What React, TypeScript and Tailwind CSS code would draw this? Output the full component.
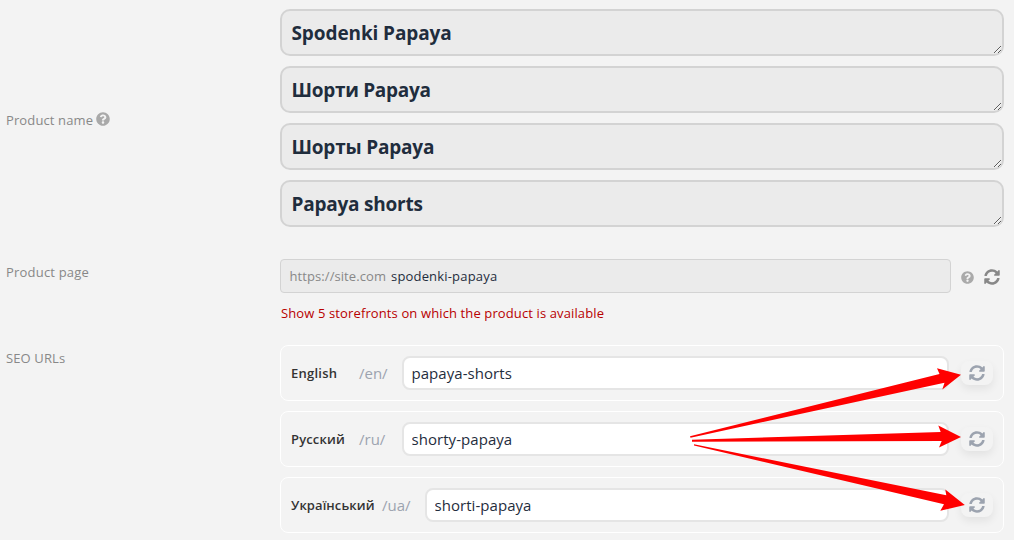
import { FaQuestionCircle, FaSyncAlt } from 'react-icons/fa';

const names = [
  { text: 'Spodenki Papaya', style: 'tracking-[-0.1px]' },
  { text: 'Шорти Papaya', style: 'tracking-[-0.28px]' },
  { text: 'Шорты Papaya', style: 'tracking-[-0.2px]' },
  { text: 'Papaya shorts', style: 'tracking-[-0.22px]' },
];

const urls = [
  { lang: 'English', code: '/en/', slug: 'papaya-shorts', langStyle: 'w-[68px] tracking-[0.25px]' },
  { lang: 'Русский', code: '/ru/', slug: 'shorty-papaya', langStyle: 'w-[68px] tracking-[0.15px]' },
  { lang: 'Український', code: '/ua/', slug: 'shorti-papaya', langStyle: 'w-[91px] tracking-[0.08px]' },
];

function Arrows() {
  return (
    <svg className="absolute left-0 top-0 pointer-events-none" width="1014" height="540" fill="#ff0000">
      <polygon points="690,436.3 939.5,374 937,368.3 961,374.8 942.3,389.5 944.5,382.7 690.5,437.7" />
      <polygon points="692,439.7 940.7,432 938.3,425.5 961,437 939,447.5 941.7,441 692,441.8" />
      <polygon points="694,444.3 946.3,495.3 945.3,489.5 964.8,505 940.3,510.8 944,504.3 694,445.6" />
    </svg>
  );
}

export default function App() {
  return (
    <div className="relative w-[1014px] h-[540px] overflow-hidden bg-[#f3f3f3] font-['Open_Sans','Noto_Sans',sans-serif] text-[13px] text-[#888888]">
      <div className="flex flex-col pt-[9px] pl-[6px] pr-[10px]">
        {/* Product name */}
        <div className="flex items-center h-[218px]">
          <div className="flex items-center w-[274px] pt-[4px] leading-5">
            <span className="w-[90px] tracking-[0.12px]">Product name</span>
            <FaQuestionCircle className="size-[14px] text-[#a9a9a9] -mt-[2px]" />
          </div>
          <div className="flex flex-col gap-[10px] flex-1">
            {names.map((name) => (
              <textarea
                key={name.text}
                rows={1}
                defaultValue={name.text}
                className={`block w-full h-[47px] px-[9.5px] pt-[9px] pb-[7px] rounded-[10px] border-2 border-[#d3d3d3] bg-[#ebebeb] text-[19px] leading-[27px] font-bold text-[#1f2d3d] overflow-hidden ${name.style}`}
              />
            ))}
          </div>
        </div>

        {/* Product page */}
        <div className="flex mt-[32px] h-[86px]">
          <div className="w-[274px] pt-[3px] leading-5 tracking-[0.2px]">Product page</div>
          <div className="flex-1">
            <div className="flex items-center">
              <div className="flex items-center w-[671px] h-[34px] pt-[2px] pl-[8.5px] rounded-[4px] border border-[#d3d3d3] bg-[#ebebeb]">
                <span className="w-[101.5px] tracking-[0.08px]">https://site.com</span>
                <span className="text-[#1f2d3d] tracking-[0.18px]">spodenki-papaya</span>
              </div>
              <FaQuestionCircle className="size-[13px] ml-[10px] mt-[3px] text-[#aaaaaa]" />
              <FaSyncAlt className="size-[16px] ml-[10px] mt-[2px] text-[#888888]" />
            </div>
            <div className="pl-[1px] mt-[10px] leading-5 tracking-[0.12px] text-[#b80000]">
              Show 5 storefronts on which the product is available
            </div>
          </div>
        </div>

        {/* SEO URLs */}
        <div className="flex">
          <div className="w-[274px] pt-[3px] leading-5 tracking-[0.12px]">SEO URLs</div>
          <div className="flex flex-col flex-1 gap-[10px]">
            {urls.map((url) => (
              <div key={url.code} className="flex items-center h-[56px] pl-[10px] pr-[10px] rounded-[8px] border border-white">
                <span className={`pt-[2px] font-semibold text-[#333333] ${url.langStyle}`}>{url.lang}</span>
                <span className="w-[43px] text-[15px] text-[#9ca3af]">{url.code}</span>
                <input
                  defaultValue={url.slug}
                  className="flex-1 min-w-0 h-[34px] px-[7.5px] rounded-[8px] border-2 border-[#e5e5e5] bg-white text-[15px] tracking-[0.05px] text-[#1f2d3d]"
                />
                <button className="flex items-center justify-center ml-[12px] w-[32px] h-[24px] rounded-[8px] bg-[#f3f3f3] shadow-[0_4px_8px_rgba(0,0,0,0.07)]">
                  <FaSyncAlt className="size-[16px] text-[#9ca3af]" />
                </button>
              </div>
            ))}
          </div>
        </div>
      </div>
      <Arrows />
    </div>
  );
}
